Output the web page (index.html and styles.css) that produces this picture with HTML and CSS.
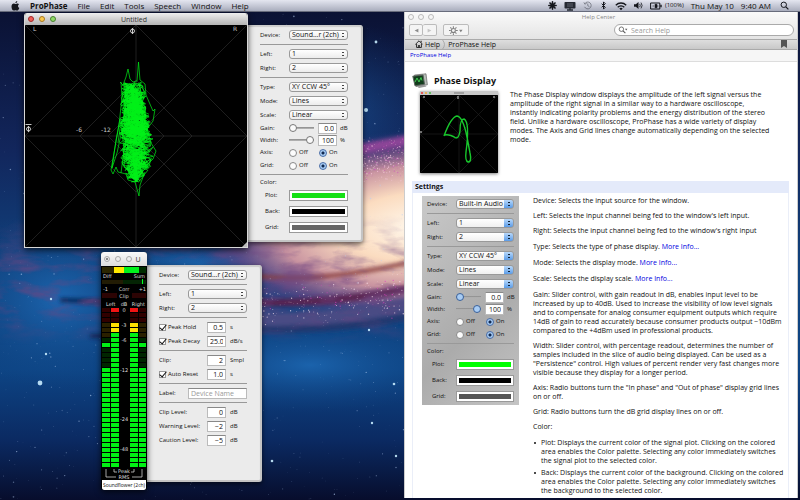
FILE: index.html
```html
<!DOCTYPE html>
<html lang="en">
<head>
<meta charset="utf-8">
<title>ProPhase</title>
<link rel="stylesheet" href="styles.css">
</head>
<body>
<svg class="wallpaper" viewBox="0 0 800 500" preserveAspectRatio="none" aria-hidden="true">
  <defs>
    <linearGradient id="sky" x1="0" y1="0" x2="0" y2="1">
      <stop offset="0" stop-color="#0a1030"/><stop offset=".3" stop-color="#12265c"/>
      <stop offset=".55" stop-color="#104480"/><stop offset=".74" stop-color="#0d4484"/>
      <stop offset=".88" stop-color="#0b2a62"/><stop offset="1" stop-color="#070d2c"/>
    </linearGradient>
    <radialGradient id="core">
      <stop offset="0" stop-color="#fffaf0"/><stop offset=".35" stop-color="#fbdcc0"/>
      <stop offset=".62" stop-color="#c893a0"/><stop offset=".82" stop-color="#7b4a86" stop-opacity=".6"/>
      <stop offset="1" stop-color="#2a3a80" stop-opacity="0"/>
    </radialGradient>
    <radialGradient id="blue">
      <stop offset="0" stop-color="#1f6cb8" stop-opacity=".85"/><stop offset="1" stop-color="#124888" stop-opacity="0"/>
    </radialGradient>
    <linearGradient id="band" x1="0" y1="0" x2="0" y2="1">
      <stop offset="0" stop-color="#000"/><stop offset=".4" stop-color="#fff"/><stop offset=".7" stop-color="#fff"/><stop offset="1" stop-color="#000"/>
    </linearGradient>
    <mask id="fade"><rect y="215" width="410" height="130" fill="url(#band)"/></mask>
    <filter id="soft" x="-20%" y="-50%" width="140%" height="200%"><feGaussianBlur stdDeviation="2"/></filter>
    <filter id="dust" x="0" y="0" width="100%" height="100%">
      <feTurbulence type="fractalNoise" baseFrequency=".025 .07" numOctaves="4" seed="7"/>
      <feColorMatrix values="0 0 0 0 .16  0 0 0 0 .06  0 0 0 0 .22  0 3 0 0 -1.35"/>
    </filter>
  </defs>
  <rect width="800" height="500" fill="url(#sky)"/>
  <ellipse cx="60" cy="300" rx="120" ry="90" fill="url(#blue)"/>
  <ellipse cx="330" cy="110" rx="120" ry="90" fill="url(#blue)" opacity=".6"/>
  <ellipse cx="200" cy="265" rx="120" ry="30" fill="url(#blue)"/>
  <ellipse cx="425" cy="226" rx="235" ry="98" fill="url(#core)" transform="rotate(-4 425 226)"/>
  <ellipse cx="310" cy="365" rx="150" ry="48" fill="url(#blue)" opacity=".9"/>
  <g filter="url(#soft)" fill="none">
    <path d="M255 276Q320 284 420 260" stroke="#8a4040" stroke-width="4"/>
    <path d="M240 302Q330 306 420 286" stroke="#5a2250" stroke-width="7"/>
    <path d="M230 318Q330 324 420 302" stroke="#484c84" stroke-width="14"/>
    <path d="M230 328Q330 334 420 314" stroke="#22386e" stroke-width="7"/>
    <path d="M345 152L420 138" stroke="#8c4597" stroke-width="10"/>
    <path d="M60 300L110 302M90 336H110" stroke="#0a2050" stroke-width="4"/>
  </g>
  <g mask="url(#fade)"><rect y="215" width="410" height="130" filter="url(#dust)" opacity=".6"/></g>
  <g id="stars"></g>
</svg>

<header class="menubar">
  <nav class="menus">
    <svg class="apple" viewBox="0 0 18 20"><path d="M12.500 0c.2 2-1.700 4.300-3.700 4.200C8.600 2.300 10.500.300 12.500 0zM15.900 6.700c-3 1.900-2.300 6 .7 7.200-.8 2.300-2.500 5.300-4.400 5.300-1.400 0-1.800-.8-3.300-.8s-2 .8-3.300.8C3 19.200 1 14.800 1 11.300 1 7.600 3.300 5.200 5.700 5.200c1.500 0 2.500.9 3.500.9s2.200-1 4-1c1.100 0 2.200.6 2.700 1.600z"/></svg>
    <a href="#" class="app">ProPhase</a><a href="#">File</a><a href="#">Edit</a><a href="#">Tools</a><a href="#">Speech</a><a href="#">Window</a><a href="#">Help</a>
  </nav>
  <div class="status">
    <svg viewBox="0 0 10 10"><g stroke="#14161c" stroke-width="1.800" stroke-linecap="round"><path d="M5 1v8M1 5h8M2.200 2.200l5.600 5.600M7.800 2.200L2.200 7.800"/></g></svg>
    <svg class="wide" viewBox="0 0 12 10"><rect x=".5" y="1" width="11" height="6.500" rx=".8" fill="#252932"/><path d="M3 9h6M6 7v2" stroke="#252932" stroke-width="1.300"/><path d="M3 3h6M3 5h6" stroke="#767c88" stroke-width=".7"/></svg>
    <svg class="dim" viewBox="0 0 10 10"><path d="M1.800 6.500a3.800 3.800 0 1 0 .2-3.500M1 1.500L2 3.500l2-.8M5.300 2.800V5.200l1.800 1" fill="none" stroke="#30343e" stroke-width=".9"/></svg>
    <svg viewBox="0 0 10 10"><path d="M3 3l4 4-2 2V1l2 2-4 4" fill="none" stroke="#14161c" stroke-width="1.100"/></svg>
    <svg class="wide" viewBox="0 0 12 10"><g fill="none" stroke="#14161c" stroke-width="1.300"><path d="M.8 4.200a7.200 7.200 0 0 1 10.400 0M2.700 6.200a4.600 4.600 0 0 1 6.600 0"/></g><path d="M4.300 7.500a2.500 2.500 0 0 1 3.400 0L6 9.300z"/></svg>
    <svg viewBox="0 0 10 10"><path d="M0 3.500h2L5 1v8L2 6.500H0z"/><path d="M6.300 3.200q1.300 1.800 0 3.600M7.800 1.800q2.400 3.200 0 6.400" fill="none" stroke="#14161c" stroke-width=".9"/></svg>
    <svg class="wide" viewBox="0 0 12 10"><path d="M.6 2h9.200v6H.6z" fill="none" stroke="#14161c"/><path d="M10.300 3.800h1.400v2.400h-1.400z"/><path d="M2.500 5h1.500M5 3.300h2v3.400H5zM7 5h1.500" stroke="#14161c" stroke-width=".6"/></svg>
    <span class="charge">(100%)</span>
    <span class="date">Thu May 10</span>
    <time>9:40 AM</time>
    <svg viewBox="0 0 10 10"><circle cx="4.200" cy="4.200" r="3" fill="none" stroke="#14161c" stroke-width="1.100"/><path d="M6.500 6.500L9.300 9.300" stroke="#14161c" stroke-width="1.400"/></svg>
  </div>
</header>

<main class="desktop">
  <section class="app-window phase">
    <div class="frame">
      <div class="titlebar"><span class="lights"><i class="red"></i><i class="amber"></i><i class="green"></i></span><h1>Untitled</h1></div>
      <svg class="scope" viewBox="0 0 222 222">
        <rect width="222" height="222" fill="#000"/>
        <g fill="none" stroke="#333" stroke-width=".6">
          <path d="M0 111H222M111 0V222M0 0L222 222M222 0L0 222"/>
          <path d="M111 0L222 111 111 222 0 111zM111 55L167 111 111 167 55 111zM111 83L139 111 111 139 83 111z"/>
        </g>
        <g id="trace" fill="none" stroke="#00f018" stroke-width=".7" stroke-linejoin="round">
          <path d="M95 57L98 60 101 52 103 44 105 54 108 57 112 56 113.500 37 115 55 120 59 121 70 128 86 130 84 128 96 122 104 126 118 131 126 128 134 121 141M96 57L97 72 94 100 89 128 86 145 88 149 91 142 93 147 101 149 103 155 110 157 114 171 115 160 120 147"/>
          <path d="M95 94L91 115 87 143 92 128 97 105M93 118L96 96 99 125 96 148"/>
        </g>
        <g class="scope-text"><text x="8" y="6">L</text><text x="208" y="6">R</text><text x="51" y="107">-6</text><text x="76" y="107">-12</text></g>
        <g fill="none" stroke="#ddd" stroke-width=".9"><circle cx="107.500" cy="6" r="2"/><path d="M107.500 3V9M3.500 101v6M.5 99.500h6"/><circle cx="3.500" cy="104" r="2"/></g>
        <path d="M222 217v5h-5z" fill="#bbb"/>
      </svg>
    </div>
    <form class="drawer">
      <div class="row"><label for="p-dev">Device:</label><select id="p-dev"><option>Sound...r (2ch)</option></select></div>
      <hr>
      <div class="row"><label for="p-left">Left:</label><select id="p-left"><option>1</option></select></div>
      <div class="row"><label for="p-right">Right:</label><select id="p-right"><option>2</option></select></div>
      <hr>
      <div class="row"><label for="p-type">Type:</label><select id="p-type"><option>XY CCW 45°</option></select></div>
      <div class="row"><label for="p-mode">Mode:</label><select id="p-mode"><option>Lines</option></select></div>
      <div class="row"><label for="p-scale">Scale:</label><select id="p-scale"><option>Linear</option></select></div>
      <div class="row slide"><label for="p-gain">Gain:</label><input type="range" id="p-gain" value="0"><input type="text" aria-label="Gain in dB" value="0.0"><span>dB</span></div>
      <div class="row slide"><label for="p-width">Width:</label><input type="range" id="p-width" value="100"><input type="text" aria-label="Width in percent" value="100"><span>%</span></div>
      <div class="row radios"><span>Axis:</span><label><input type="radio" name="p-axis">Off</label><label><input type="radio" name="p-axis" checked>On</label></div>
      <div class="row radios"><span>Grid:</span><label><input type="radio" name="p-grid">Off</label><label><input type="radio" name="p-grid" checked>On</label></div>
      <hr>
      <div class="row caption">Color:</div>
      <div class="row colour"><label for="p-plot">Plot:</label><input type="color" id="p-plot" value="#14e014"></div>
      <div class="row colour"><label for="p-back">Back:</label><input type="color" id="p-back" value="#000000"></div>
      <div class="row colour"><label for="p-gcol">Grid:</label><input type="color" id="p-gcol" value="#666666"></div>
    </form>
  </section>

  <section class="app-window level">
    <div class="frame">
      <div class="titlebar"><span class="lights"><i class="dot"></i><i></i><i></i></span><h1>U</h1></div>
      <svg class="meter" viewBox="0 0 46 214">
        <rect width="46" height="214" fill="#000"/>
        <path d="M1 1h12v6H1z" fill="#2c2600"/><path d="M13 1h10v6H13z" fill="#ffe800"/><path d="M23 1h15v6H23z" fill="#00f01c"/><path d="M38 1h7v6h-7z" fill="#002c00"/>
        <path d="M1 14h21v4H1z" fill="#221c04"/><path d="M22 14h23v4H22z" fill="#042404"/><path d="M41 13h1v5h-1z" fill="#0f2"/>
        <path d="M1 27h15v5H1zM31 27h14v5H31z" fill="#2c0404"/>
        <g id="segments"></g>
        <g class="meter-text">
          <text x="2" y="12">Diff</text><text x="44" y="12" text-anchor="end">Sum</text>
          <text x="2" y="25">-1</text><text x="23" y="25" text-anchor="middle">Corr</text><text x="45" y="25" text-anchor="end">+1</text>
          <text x="23" y="32" text-anchor="middle">Clip</text>
          <text x="5" y="40">Left</text><text x="23" y="40" text-anchor="middle">dB</text><text x="44" y="40" text-anchor="end">Right</text>
          <g text-anchor="middle"><text x="23" y="46">0</text><text x="23" y="61">-3</text><text x="23" y="76">-6</text><text x="23" y="106">-12</text><text x="23" y="155">-24</text><text x="23" y="185">-48</text><text x="23" y="207">Peak</text><text x="23" y="213">RMS</text></g>
        </g>
        <path d="M5 203v8h10M41 203v8H31M13 203v3h3M33 203v3h-3" fill="none" stroke="#ccc" stroke-width=".8"/>
      </svg>
      <div class="device">Soundflower (2ch)</div>
    </div>
    <form class="drawer">
      <div class="row"><label for="m-dev">Device:</label><select id="m-dev"><option>Sound...r (2ch)</option></select></div>
      <hr>
      <div class="row"><label for="m-left">Left:</label><select id="m-left"><option>1</option></select></div>
      <div class="row"><label for="m-right">Right:</label><select id="m-right"><option>2</option></select></div>
      <hr>
      <div class="row value"><label><input type="checkbox" checked>Peak Hold</label><input type="text" aria-label="Peak hold time" value="0.5"><span>s</span></div>
      <div class="row value"><label><input type="checkbox" checked>Peak Decay</label><input type="text" aria-label="Peak decay rate" value="25.0"><span>dB/s</span></div>
      <hr>
      <div class="row value"><label for="m-clip">Clip:</label><input type="text" id="m-clip" value="2"><span>Smpl</span></div>
      <div class="row value"><label><input type="checkbox" checked>Auto Reset</label><input type="text" aria-label="Auto reset time" value="1.0"><span>s</span></div>
      <hr>
      <div class="row"><label for="m-label">Label:</label><input type="text" class="name" id="m-label" placeholder="Device Name"></div>
      <hr>
      <div class="row value"><label for="m-cl">Clip Level:</label><input type="text" id="m-cl" value="0"><span>dB</span></div>
      <div class="row value"><label for="m-wl">Warning Level:</label><input type="text" id="m-wl" value="−2"><span>dB</span></div>
      <div class="row value"><label for="m-ca">Caution Level:</label><input type="text" id="m-ca" value="−5"><span>dB</span></div>
    </form>
  </section>

  <section class="help">
    <header class="chrome">
      <div class="help-title"><span class="lights"><i></i><i></i><i></i></span><h1>Help Center</h1></div>
      <div class="tools">
        <span class="pair"><button type="button" aria-label="Back"><svg viewBox="0 0 8 8"><path d="M7 1v6L1 4z" fill="#8c8c8c"/></svg></button><button type="button" aria-label="Forward"><svg viewBox="0 0 8 8"><path d="M1 1v6l6-3z" fill="#c4c4c4"/></svg></button></span>
        <button type="button" class="gear" aria-label="Actions"><svg viewBox="0 0 16 10"><circle cx="5" cy="5" r="2.300" fill="none" stroke="#808080" stroke-width="1.200"/><path d="M5 0v2M5 8v2M0 5h2M8 5h2M1.500 1.500l1.400 1.400M7.100 7.100l1.400 1.400M8.500 1.500L7.100 2.900M2.900 7.100L1.500 8.500" stroke="#808080" stroke-width="1.200"/><path d="M11.500 4h4L13.500 7z" fill="#808080"/></svg></button>
        <label class="search"><svg viewBox="0 0 12 10"><circle cx="4" cy="4" r="2.800" fill="none" stroke="#555"/><path d="M6 6l3 3" stroke="#555" stroke-width="1.300"/><path d="M8.500 3.500h3l-1.500 2z" fill="#555"/></svg><input type="search" placeholder="Search Help" aria-label="Search Help"></label>
      </div>
    </header>
    <nav class="crumbs">
      <svg class="home" viewBox="0 0 10 10"><path d="M.5 5.500L5 1l4.500 4.500M2 5v4.300h6V5" fill="none" stroke="#222" stroke-width="1.200"/><path d="M4 6.200h2v3H4zM7 1h1.300v2.500L7 2.500z" fill="#222"/></svg>
      <a href="#">Help</a><svg class="chev" viewBox="0 0 4 10"><path d="M.5 0Q4.500 5 .5 10" fill="none" stroke="#999" stroke-width=".8"/></svg><a href="#">ProPhase Help</a>
      <svg class="mark" viewBox="0 0 6 8"><path d="M0 0h6v8L3 6 0 8z" fill="#555"/></svg>
    </nav>
    <div class="trail"><a href="#">ProPhase Help</a></div>
    <article>
      <div class="heading">
        <svg viewBox="0 0 16 16"><path d="M2.500 2L14 .8l1.400 11L4 13.500z" fill="#b9bdb9" stroke="#555" stroke-width=".6"/><path d="M.8 3.200L11 2l1.500 9.200L3 12.800z" fill="#123c1c" stroke="#59625c"/><path d="M3 9L5 5l2 4 2-4.500 1 3" fill="none" stroke="#3ecb50"/><path d="M5 13.500l8-1.200 1.500 1.200-7.500 1.400z" fill="#999"/></svg>
        <h2>Phase Display</h2>
      </div>
      <div class="intro">
        <svg class="thumb" viewBox="0 0 78 82">
          <rect width="78" height="4" fill="#c8c8c8"/><path d="M1 2h2" stroke="#e33" stroke-width="1.500"/><path d="M5 2h2" stroke="#ea3" stroke-width="1.500"/><path d="M9 2h2" stroke="#4b4" stroke-width="1.500"/><path d="M34 2h10" stroke="#777"/>
          <rect y="4" width="78" height="78" fill="#000"/>
          <path d="M0 43H78M39 4V82M0 4L78 82M78 4L0 82M39 4L78 43 39 82 0 43z" fill="none" stroke="#222" stroke-width=".6"/>
          <path d="M24 45Q31 26 37 25Q43 26 47 46L50 62Q52 71 48 71Q45 70 46 61Q50 31 44 28Q40 28 40 40Q39 47 36 47Q29 43 25 44" fill="none" stroke="#18c82c" stroke-width="1.400"/>
          <path d="M38 5v3M1 40v2M74 5v2M4 5v2" stroke="#aaa" stroke-width="1.300"/>
        </svg>
        <p>The Phase Display window displays the amplitude of the left signal versus the amplitude of the right signal in a similar way to a hardware oscilloscope, instantly indicating polarity problems and the energy distribution of the stereo field. Unlike a hardware oscilloscope, ProPhase has a wide variety of display modes. The Axis and Grid lines change automatically depending on the selected mode.</p>
      </div>
      <h3>Settings</h3>
      <div class="details">
        <form class="panel">
          <div class="row"><label for="h-dev">Device:</label><select id="h-dev"><option>Built-in Audio</option></select></div>
          <hr>
          <div class="row"><label for="h-left">Left:</label><select id="h-left"><option>1</option></select></div>
          <div class="row"><label for="h-right">Right:</label><select id="h-right"><option>2</option></select></div>
          <hr>
          <div class="row"><label for="h-type">Type:</label><select id="h-type"><option>XY CCW 45°</option></select></div>
          <div class="row"><label for="h-mode">Mode:</label><select id="h-mode"><option>Lines</option></select></div>
          <div class="row"><label for="h-scale">Scale:</label><select id="h-scale"><option>Linear</option></select></div>
          <div class="row slide"><label for="h-gain">Gain:</label><input type="range" id="h-gain" value="0"><input type="text" aria-label="Gain in dB" value="0.0"><span>dB</span></div>
          <div class="row slide"><label for="h-width">Width:</label><input type="range" id="h-width" value="100"><input type="text" aria-label="Width in percent" value="100"><span>%</span></div>
          <div class="row radios"><span>Axis:</span><label><input type="radio" name="h-axis">Off</label><label><input type="radio" name="h-axis" checked>On</label></div>
          <div class="row radios"><span>Grid:</span><label><input type="radio" name="h-grid">Off</label><label><input type="radio" name="h-grid" checked>On</label></div>
          <hr>
          <div class="row caption">Color:</div>
          <div class="row colour"><label for="h-plot">Plot:</label><input type="color" id="h-plot" value="#00ff00"></div>
          <div class="row colour"><label for="h-back">Back:</label><input type="color" id="h-back" value="#000000"></div>
          <div class="row colour"><label for="h-gcol">Grid:</label><input type="color" id="h-gcol" value="#555555"></div>
        </form>
        <div class="prose">
          <p>Device: Selects the input source for the window.</p>
          <p>Left: Selects the input channel being fed to the window's left input.</p>
          <p class="loose">Right: Selects the input channel being fed to the window's right input</p>
          <p class="loose">Type: Selects the type of phase display. <a href="#">More Info...</a></p>
          <p class="loose">Mode: Selects the display mode. <a href="#">More Info...</a></p>
          <p class="loose">Scale: Selects the display scale. <a href="#">More Info...</a></p>
          <p>Gain: Slider control, with gain readout in dB, enables input level to be increased by up to 40dB. Used to increase the visibility of low level signals and to compensate for analog consumer equipment outputs which require 14dB of gain to read accurately because consumer products output −10dBm compared to the +4dBm used in professional products.</p>
          <p>Width: Slider control, with percentage readout, determines the number of samples included in the slice of audio being displayed. Can be used as a "Persistence" control. High values of percent render very fast changes more visible because they display for a longer period.</p>
          <p>Axis: Radio buttons turn the "In phase" and "Out of phase" display grid lines on or off.</p>
          <p>Grid: Radio buttons turn the dB grid display lines on or off.</p>
          <p class="loose">Color:</p>
          <ul>
            <li>Plot: Displays the current color of the signal plot. Clicking on the colored area enables the Color palette. Selecting any color immediately switches the signal plot to the selected color.</li>
            <li>Back: Displays the current color of the background. Clicking on the colored area enables the Color palette. Selecting any color immediately switches the background to the selected color.</li>
          </ul>
        </div>
      </div>
    </article>
  </section>
</main>
<script src="draw.js"></script>
</body>
</html>
```
FILE: styles.css
```css
* { box-sizing: border-box; }
body {
  margin: 0;
  min-height: 100vh;
  display: flex;
  flex-direction: column;
  overflow: hidden;
  background: #0a1030;
  color: #111;
  font: 7px/9px "Open Sans", "Noto Sans", sans-serif;
}
h1, h2, h3, p, ul { margin: 0; padding: 0; font-weight: normal; }
a { color: inherit; text-decoration: none; }
svg { display: block; fill: #14161c; }
input, select, button { font: inherit; color: inherit; margin: 0; padding: 0; min-width: 0; }

.wallpaper { position: absolute; inset: 0; width: 100%; height: 100%; z-index: -1; }

.menubar {
  height: 12px;
  display: flex;
  justify-content: space-between;
  align-items: center;
  padding: 0 11px;
  background: linear-gradient(#e4e6f0, #a9adbd);
  border-bottom: 1px solid #686c7c;
  font-size: 8px;
  line-height: 11px;
}
.menus { display: flex; align-items: center; gap: 10px; }
.apple { width: 9px; height: 10px; }
.app { font-weight: bold; }
.status { display: flex; align-items: center; gap: 7px; }
.status svg { width: 9px; height: 9px; }
.status .wide { width: 12px; height: 10px; }
.status .dim { opacity: .6; }
.status time { margin-right: 2px; }
.charge { font-size: 6px; margin-left: -4px; }

.desktop { position: relative; flex: 1; }
.app-window { position: absolute; display: flex; align-items: flex-start; }
.phase { left: 24px; top: 1px; }
.level { left: 101px; top: 240px; }
.frame {
  position: relative;
  z-index: 1;
  background: #000;
  border-radius: 3px 3px 0 0;
  box-shadow: 0 2px 6px rgba(0, 0, 0, .7);
  overflow: hidden;
}
.phase .frame { width: 224px; border: solid #d8d8d8; border-width: 0 1px 1px; }
.level .frame { width: 46px; border-radius: 3px; }
.titlebar {
  height: 12px;
  display: flex;
  align-items: center;
  padding: 0 3px;
  background: linear-gradient(#eee, #b4b4b4);
  color: #333;
}
.level .titlebar { height: 14px; background: linear-gradient(#fafafa, #ddd); }
.titlebar h1 { flex: 1; text-align: center; font-size: 7px; }
.phase .titlebar h1 { padding-right: 32px; }
.lights { display: flex; gap: 5px; }
.lights i { width: 6px; height: 6px; border-radius: 50%; background: #eee; border: 1px solid #aaa; }
.lights .red { background: #f06058; border-color: #a02828; }
.lights .amber { background: #f8c850; border-color: #a87820; }
.lights .green { background: #90d868; border-color: #488030; }
.lights .dot { background: radial-gradient(#888 25%, #eee 30%); }
.scope { width: 222px; height: 222px; }
.scope-text { font: 6px "DejaVu Sans", sans-serif; fill: #ccc; }
.meter { width: 46px; height: 214px; }
.meter-text { font: 5px/6px "DejaVu Sans", sans-serif; fill: #ddd; }
.device { height: 10px; margin: 0 1px; background: #fff; border-radius: 0 0 2px 2px; font-size: 5px; line-height: 10px; text-align: center; white-space: nowrap; }

.drawer {
  width: 115px;
  margin-top: 12px;
  padding: 3px 13px 5px 12px;
  background: #ebebeb;
  border: solid #c4c4c4;
  border-width: 0 2px 2px 0;
  border-radius: 0 3px 3px 0;
  box-shadow: 0 2px 5px rgba(0, 0, 0, .6), inset 0 2px 1px #ccc;
}
.level .drawer { min-height: 217px; margin-top: 13px; }
.row { height: 14px; display: grid; grid-template-columns: 29px 1fr; align-items: center; font-size: 6px; white-space: nowrap; }
hr { height: 5px; margin: 0; border: 0; background: linear-gradient(#999, #999) center / 100% 1px no-repeat; }
select {
  appearance: none;
  width: 100%;
  height: 10px;
  padding: 0 2px;
  border: 1px solid #999;
  border-radius: 3px;
  font-size: 7px;
  line-height: 8px;
  background:
    linear-gradient(#444, #444) right 3px top 2px / 2px 1px no-repeat,
    linear-gradient(#444, #444) right 3px top 5px / 2px 1px no-repeat,
    linear-gradient(#fff, #ececec);
}
input[type="text"] {
  height: 11px;
  padding: 0 2px;
  border: 1px solid #bbb;
  border-top-color: #888;
  border-radius: 0;
  background: #fff;
  font-size: 7px;
  line-height: 9px;
  text-align: right;
}
input.name { width: 100%; text-align: left; }
::placeholder { color: #999; opacity: 1; }

.slide { height: 12px; grid-template-columns: 29px 29px 19px 1fr; }
.slide span { padding-left: 3px; }
.slide input[type="range"] { appearance: none; width: 25px; height: 8px; background: linear-gradient(#888, #bbb) center / 100% 2px no-repeat; }
.slide input[type="range"]::-webkit-slider-thumb { appearance: none; width: 8px; height: 8px; border-radius: 50%; border: 1px solid #777; background: #fafafa; }

.radios { height: 13px; grid-template-columns: 29px 30px 1fr; }
.radios label, .value label { display: flex; align-items: center; gap: 2px; }
input[type="radio"] { appearance: none; width: 8px; height: 8px; border: 1px solid #888; border-radius: 50%; background: #fcfcfc; }
input[type="radio"]:checked { border-color: #4a6ea8; background: radial-gradient(circle, #102850 1px, #a8ccf4 2px); }
.caption { height: 10px; }
.colour { height: 16px; }
.colour label { padding-left: 5px; }
input[type="color"] { appearance: none; width: 100%; height: 11px; padding: 2px; border: 1px solid #999; background: #fff; }
::-webkit-color-swatch-wrapper { padding: 0; }
::-webkit-color-swatch { border: 0; border-radius: 0; }

.value { grid-template-columns: 48px 19px 1fr; }
.value span { padding-left: 4px; }
input[type="checkbox"] {
  appearance: none;
  position: relative;
  width: 7px;
  height: 7px;
  border: 1px solid #999;
  background: #fff;
}
input[type="checkbox"]:checked::after {
  content: "";
  position: absolute;
  left: 1px;
  top: -2px;
  width: 3px;
  height: 6px;
  border: solid #111;
  border-width: 0 1px 1px 0;
  transform: rotate(40deg);
}

.help {
  position: absolute;
  left: 404px;
  right: 2px;
  top: 0;
  bottom: 2px;
  display: flex;
  flex-direction: column;
  overflow: hidden;
  background: #fff;
  border: solid #ccc;
  border-width: 0 1px;
}
.chrome { height: 28px; background: linear-gradient(#fafafa, #e4e4e4); }
.help-title { height: 10px; display: flex; align-items: center; padding: 0 3px; color: #888; }
.help-title h1 { flex: 1; padding-right: 31px; text-align: center; font-size: 6px; }
.help-title .lights { gap: 4px; }
.help-title i { background: #f6f6f6; border-color: #bbb; }
.tools { height: 16px; display: flex; align-items: center; gap: 6px; padding: 0 3px 0 4px; }
.pair { display: flex; }
button { width: 14px; height: 12px; display: grid; place-items: center; border: 1px solid #bbb; background: #f4f4f4; border-radius: 2px; }
button + button { border-left: 0; }
button svg { width: 5px; height: 5px; }
.gear { width: 26px; }
.gear svg { width: 14px; height: 9px; }
.search { width: 180px; height: 12px; margin-left: auto; display: flex; align-items: center; gap: 3px; padding: 0 3px; border: 1px solid #aaa; border-radius: 6px; background: #fff; }
.search svg { width: 10px; height: 8px; }
.search input { flex: 1; height: 10px; border: 0; background: none; appearance: none; }
.crumbs { height: 12px; display: flex; align-items: center; gap: 2px; padding: 0 10px; background: linear-gradient(#dedede, #c8c8c8); border: solid #aaa; border-width: 1px 0; }
.home { width: 8px; height: 8px; }
.chev { width: 4px; height: 9px; }
.mark { width: 6px; height: 8px; margin-left: auto; }
.trail { height: 12px; padding: 1px 5px; background: #f6f6f6; border-bottom: 1px solid #ddd; font-size: 6px; color: #0000e0; }
article { flex: 1; padding: 10px 8px 0 7px; }
.heading { display: flex; align-items: center; gap: 6px; height: 18px; }
.heading svg { width: 16px; height: 16px; }
h2 { font-size: 9px; line-height: 12px; font-weight: bold; }
.intro { display: flex; align-items: flex-start; gap: 12px; padding: 0 16px 0 8px; height: 91px; }
.thumb { flex: none; width: 78px; height: 82px; margin-top: 1px; box-shadow: 0 1px 3px rgba(0, 0, 0, .5); }
h3 { height: 12px; padding: 1px 3px; background: #e4eafa; font-size: 7px; line-height: 10px; font-weight: bold; }
.details { display: flex; align-items: flex-start; gap: 14px; padding: 3px 3px 0 9px; border: solid #eaeef8; border-width: 0 1px; }
.panel { flex: none; width: 97px; padding: 1px 5px 0; min-height: 209px; background: linear-gradient(135deg, #c9c9c9, #ababab 60%, #c4c4c4); }
.panel select {
  background:
    linear-gradient(#123, #123) right 3px top 2px / 2px 1px no-repeat,
    linear-gradient(#123, #123) right 3px top 5px / 2px 1px no-repeat,
    linear-gradient(#b8d8fa, #5b9ce8) right / 9px 100% no-repeat,
    linear-gradient(#fff, #f0f0f0);
}
.panel .slide input[type="range"]::-webkit-slider-thumb { background: #a8ccf4; border-color: #3a6098; }
.prose { flex: 1; min-width: 0; }
.prose p { margin-bottom: 6px; }
.prose .loose { margin-bottom: 7px; }
.prose a { color: #0000e0; }
li { display: block; position: relative; padding-left: 8px; margin-bottom: 3px; }
li::before { content: ""; position: absolute; left: 1px; top: 4px; width: 2px; height: 2px; border-radius: 50%; background: #111; }
```
FILE: draw.js
```js
const NS = 'http://www.w3.org/2000/svg';
let seed = 42;
const rnd = () => (seed = (seed * 1664525 + 1013904223) % 4294967296) / 4294967296;
const add = (parent, tag, attrs) => {
  const el = document.createElementNS(NS, tag);
  for (const k in attrs) el.setAttribute(k, attrs[k]);
  parent.appendChild(el);
};

// Star field, with a denser pink cluster along the galaxy's edge.
const stars = document.getElementById('stars');
for (let i = 0; i < 900; i++) {
  add(stars, 'circle', { cx: rnd() * 405, cy: 12 + rnd() * 488, r: 0.2 + rnd() * rnd() * 0.7, fill: '#b8d0f4', opacity: 0.2 + rnd() * 0.5 });
}
for (let i = 0; i < 260; i++) {
  const x = 245 + rnd() * 160;
  add(stars, 'circle', { cx: x, cy: 308 - (x - 245) * 0.09 + (rnd() + rnd() - 1) * 24, r: 0.2 + rnd() * 0.5, fill: i % 4 ? '#ffe8f4' : '#e040c0', opacity: 0.7 });
  add(stars, 'circle', { cx: 362 + rnd() * 42, cy: 160 + (rnd() + rnd() - 1) * 26, r: 0.2 + rnd() * 0.5, fill: i % 3 ? '#ffd0e8' : '#d050c0', opacity: 0.7 });
}
for (const [x, y, r] of [[40, 383, 2.4], [46, 354, 1.2], [51, 299, 1.2], [376, 42, 1.4], [366, 110, 2], [394, 384, 1.3], [372, 423, 1.2], [396, 456, 1.2], [272, 461, 1.3], [369, 330, 1.2]]) {
  add(stars, 'circle', { cx: x, cy: y, r: r, fill: '#c8ecff', opacity: 0.9 });
}

// Oscilloscope trace: a dense scribble inside a tall, narrow envelope.
const envelope = [[56, 96, 120], [75, 95, 122], [100, 94, 126], [125, 94, 130], [140, 97, 127], [152, 101, 119], [160, 108, 116]];
const trace = document.getElementById('trace');
const at = y => {
  let k = 0;
  while (k < envelope.length - 2 && envelope[k + 1][0] < y) k++;
  const a = envelope[k], b = envelope[k + 1], t = (y - a[0]) / (b[0] - a[0]);
  return [a[1] + (b[1] - a[1]) * t, a[2] + (b[2] - a[2]) * t];
};
for (let n = 0; n < 40; n++) {
  let d = '', y = 62 + rnd() * 88;
  for (let i = 0; i < 24; i++) {
    y += (rnd() - 0.5) * 24;
    if (y < 57) y = 57 + rnd() * 14;
    if (y > 157) y = 157 - rnd() * 20;
    const [l, r] = at(y);
    const m = i % 3 ? (rnd() + rnd()) / 2 : rnd();
    d += (i ? (i % 2 ? ' ' : ' ') : 'M') + (l + (r - l) * m).toFixed(1) + ' ' + y.toFixed(1);
  }
  add(trace, 'path', { d });
}

// Level meter segments: outer columns show RMS, inner columns show peak.
const segments = document.getElementById('segments');
for (let i = 0; i < 32; i++) {
  const unlit = i < 3 ? '#300000' : i < 6 ? '#2a2000' : '#002600';
  const peak = i === 0 ? '#f01414' : i < 3 ? unlit : i < 5 ? '#ffe000' : '#00f014';
  const rms = i === 7 || i >= 12 ? '#00f014' : unlit;
  const y = 42 + i * 5;
  for (const [x, fill] of [[1, rms], [10, peak], [29, peak], [38, rms]]) {
    add(segments, 'rect', { x, y, width: x === 38 ? 7 : 8, height: 4, fill });
  }
}
```
